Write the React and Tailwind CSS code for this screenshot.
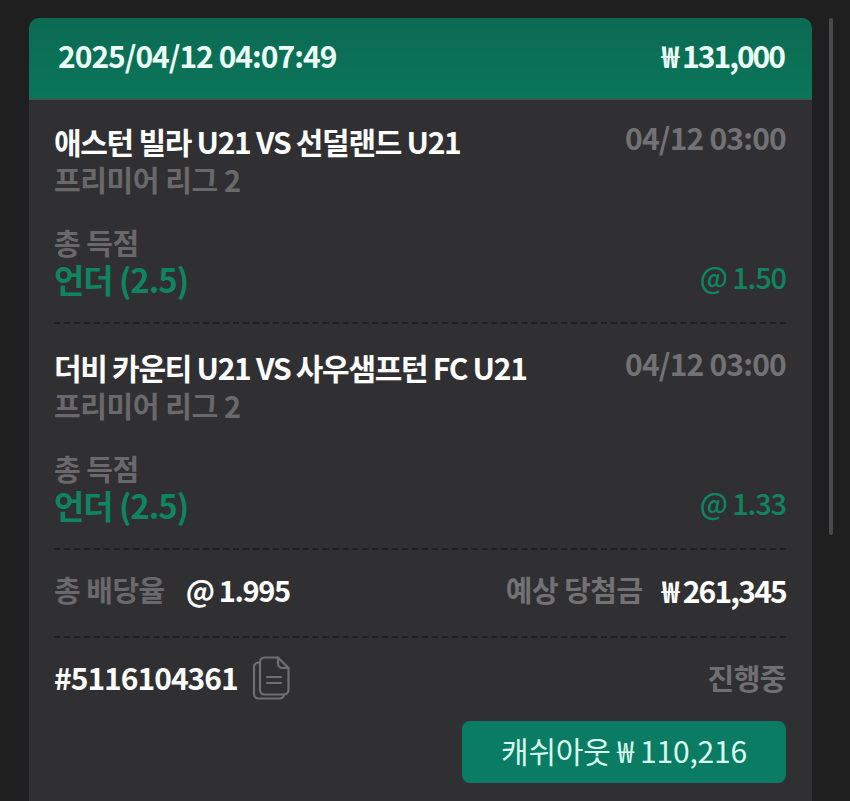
const font = { fontFamily: '"Noto Sans CJK KR", "Noto Sans", sans-serif' };

function Match({ title, odds }) {
  return (
    <div className="border-b-2 border-dashed border-[#1f1f21] pb-[27px]">
      <div className="flex justify-between items-start h-[38px]">
        <div className="text-[30px] leading-[34px] font-bold text-white tracking-[-1.3px] mt-[4px]">{title}</div>
        <div className="text-[30px] leading-[34px] font-bold text-[#727274] tracking-[-0.8px]">04/12 03:00</div>
      </div>
      <div className="text-[29px] leading-[34px] font-bold text-[#69696b] tracking-[-0.4px] mt-[4px]">프리미어 리그 2</div>
      <div className="text-[29px] leading-[34px] font-bold text-[#69696b] tracking-[-0.5px] mt-[29px]">총 득점</div>
      <div className="flex justify-between items-start h-[33px] mt-[3px] text-[#0f8460]">
        <span className="text-[33px] leading-[34px] font-bold tracking-[-1.1px]">언더 (2.5)</span>
        <span className="text-[29px] leading-[28px] font-medium tracking-[-1.1px]">@ {odds}</span>
      </div>
    </div>
  );
}

export default function App() {
  return (
    <div style={font} className="w-[850px] h-[801px] bg-[#1f1f20] overflow-hidden flex items-start pt-[18px] pl-[29px]">
      <div className="w-[783px] h-[800px] bg-[#303032] rounded-t-[10px] overflow-hidden shrink-0">
        <div className="h-[82px] bg-gradient-to-b from-[#0b6b53] to-[#0a7558] border-b-2 border-[#2f5f50] flex items-center justify-between pl-[29px] pr-[28px] pb-[5px] text-[#ecfff8] font-bold">
          <span className="text-[30px] tracking-[-1px]">2025/04/12 04:07:49</span>
          <span className="text-[30px] tracking-[-2px]">₩ 131,000</span>
        </div>
        <div className="pl-[25px] pr-[26px] pt-[20px]">
          <Match title="애스턴 빌라 U21 VS 선덜랜드 U21" odds="1.50" />
          <div className="pt-[22px]">
            <Match title="더비 카운티 U21 VS 사우샘프턴 FC U21" odds="1.33" />
          </div>
          <div className="flex justify-between items-center h-[88px] pb-[6px] border-b-2 border-dashed border-[#1f1f21] font-bold">
            <div className="flex items-center">
              <span className="text-[#69696b] text-[29px] tracking-[-0.5px]">총 배당율</span>
              <span className="text-white text-[29px] ml-[21px] tracking-[-1.4px]">@ 1.995</span>
            </div>
            <div className="flex items-center">
              <span className="text-[#727274] text-[29px] tracking-[-0.5px]">예상 당첨금</span>
              <span className="text-white text-[30px] ml-[19px] tracking-[-1.8px]">₩ 261,345</span>
            </div>
          </div>
          <div className="flex justify-between items-center h-[83px] pb-[4px]">
            <div className="flex items-center">
              <span className="text-white font-bold text-[30px] tracking-[-1px]">#5116104361</span>
              <svg className="ml-[14px]" width="38" height="44" viewBox="0 0 38 44" fill="none" stroke="#6f6f71" strokeWidth="2.2" strokeLinecap="round" strokeLinejoin="round">
                <path d="M8 6.5H6.5A4.5 4.5 0 0 0 2 11v27a4.5 4.5 0 0 0 4.5 4.5h21a4.5 4.5 0 0 0 4.5-4" />
                <path d="M12.5 1.5h13.5l10.5 10.5V34a4.5 4.5 0 0 1-4.5 4.5H12.5A4.5 4.5 0 0 1 8 34V6a4.5 4.5 0 0 1 4.5-4.5Z" />
                <path d="M26 1.5v6a4.5 4.5 0 0 0 4.5 4.5h6" />
                <path d="M15 21h14M15 27h14" />
              </svg>
            </div>
            <span className="text-[#6f6f71] font-bold text-[29px] tracking-[-0.5px]">진행중</span>
          </div>
          <div className="flex justify-end">
            <div className="w-[324px] h-[62px] pb-[4px] bg-[#0a7c63] rounded-[8px] flex items-center justify-center text-[#d8fff2] text-[30px] tracking-[-0.2px]">
              캐쉬아웃 ₩ 110,216
            </div>
          </div>
        </div>
      </div>
      <div className="ml-[17px] w-[4px] h-[517px] bg-[#4a4a4c] rounded-full shrink-0" />
    </div>
  );
}
